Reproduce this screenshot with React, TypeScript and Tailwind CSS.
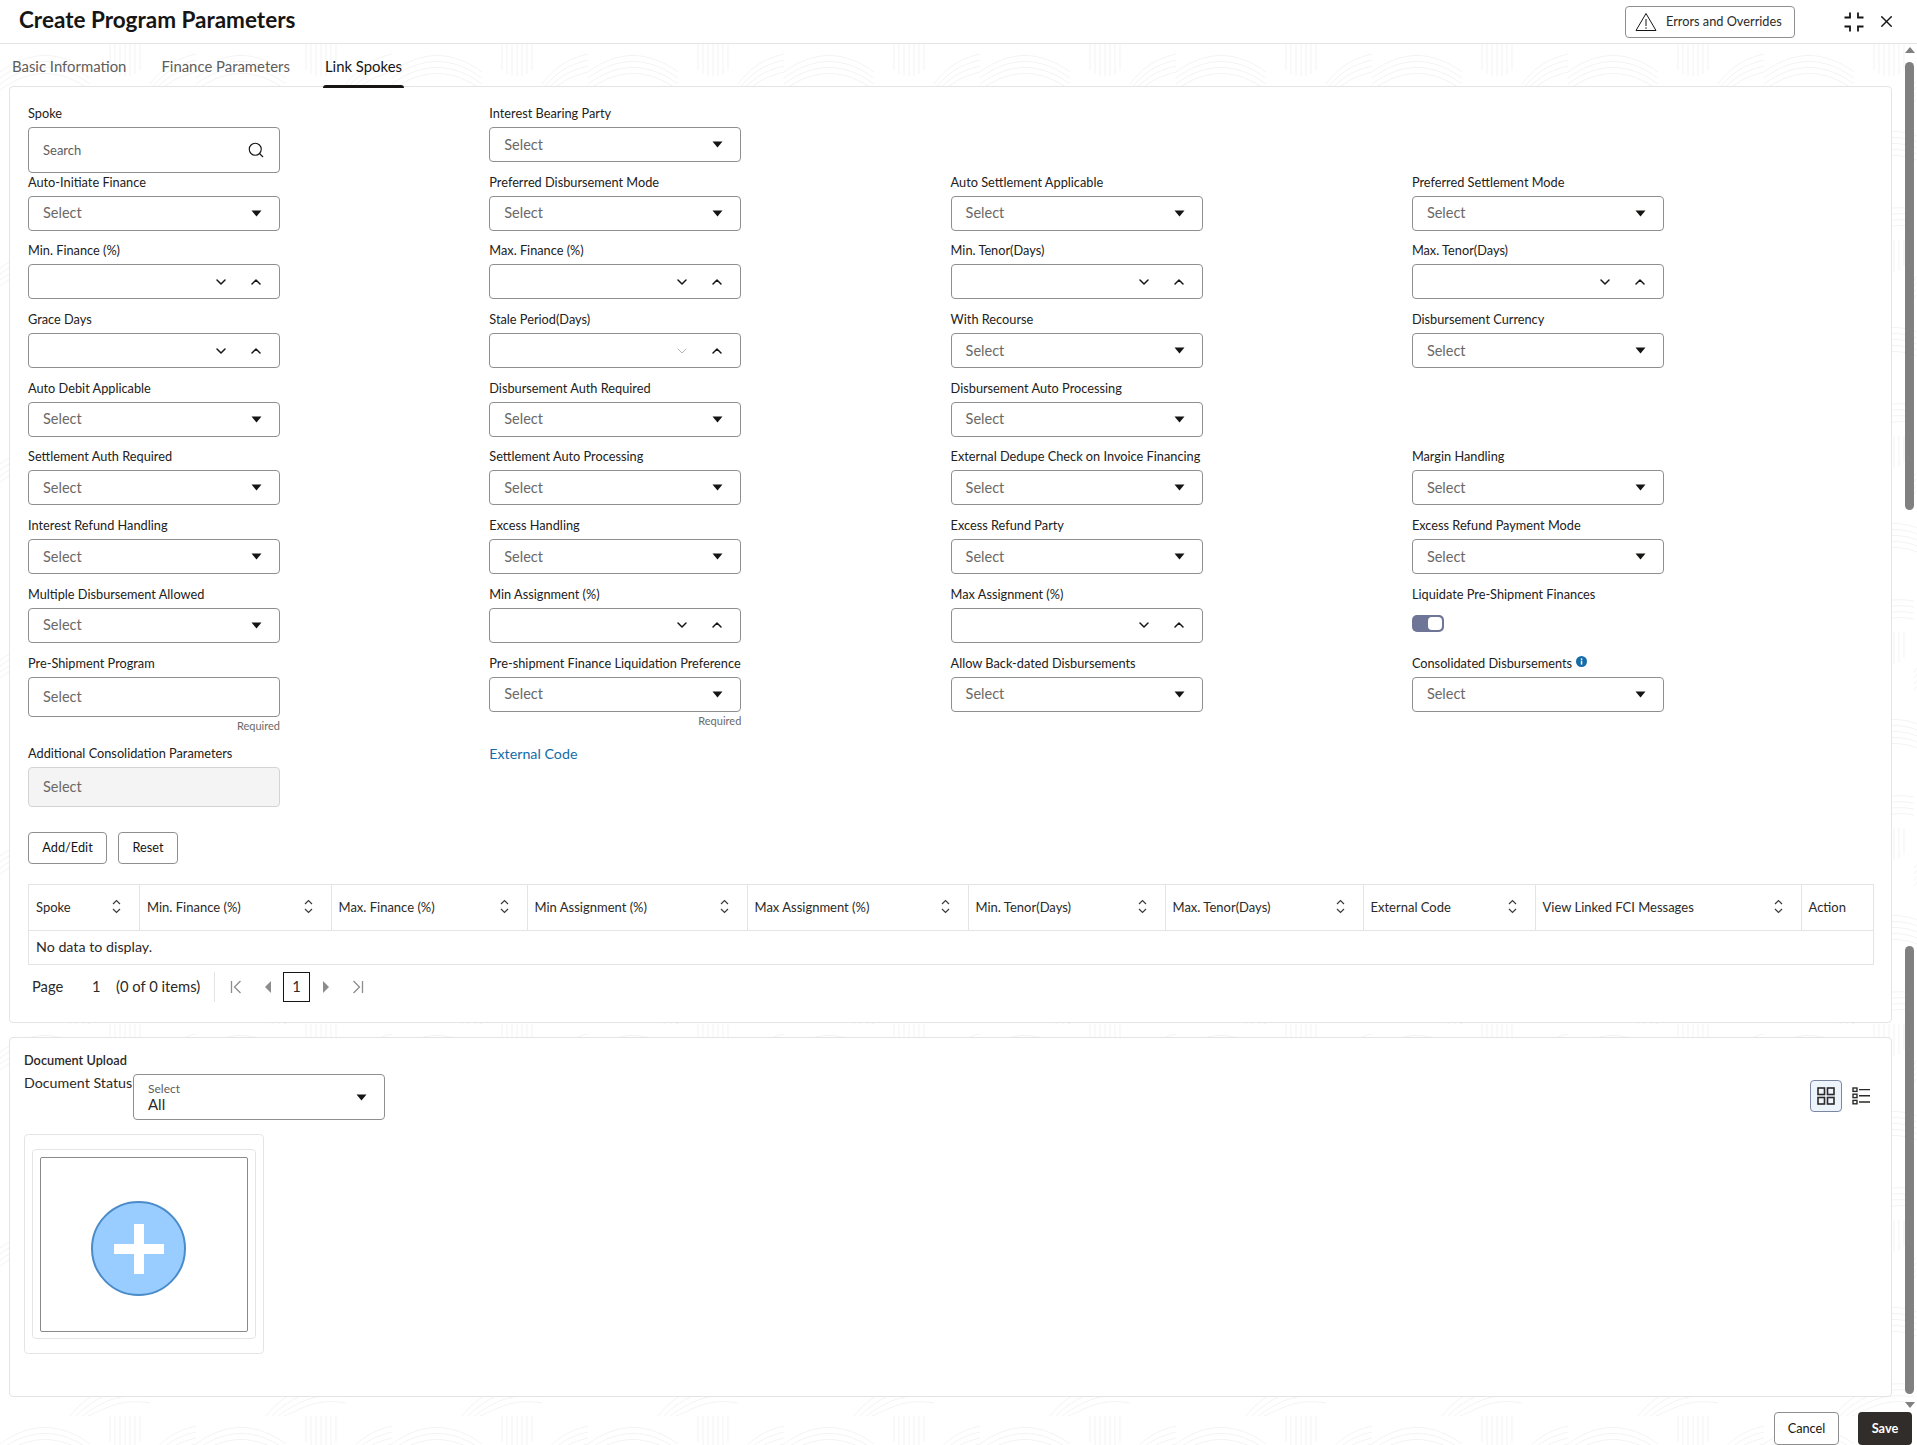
import { ChevronDown, ChevronUp, Search, X } from 'lucide-react';

type Kind = 'select' | 'stepper' | 'stepperOff' | 'search' | 'toggle' | 'none';
type FieldDef = { label: string; kind: Kind; info?: boolean };

const sel = (label: string): FieldDef => ({ label, kind: 'select' });
const num = (label: string): FieldDef => ({ label, kind: 'stepper' });
const none: FieldDef = { label: '', kind: 'none' };

const rows: FieldDef[][] = [
  [{ label: 'Spoke', kind: 'search' }, sel('Interest Bearing Party'), none, none],
  [sel('Auto-Initiate Finance'), sel('Preferred Disbursement Mode'), sel('Auto Settlement Applicable'), sel('Preferred Settlement Mode')],
  [num('Min. Finance (%)'), num('Max. Finance (%)'), num('Min. Tenor(Days)'), num('Max. Tenor(Days)')],
  [num('Grace Days'), { label: 'Stale Period(Days)', kind: 'stepperOff' }, sel('With Recourse'), sel('Disbursement Currency')],
  [sel('Auto Debit Applicable'), sel('Disbursement Auth Required'), sel('Disbursement Auto Processing'), none],
  [sel('Settlement Auth Required'), sel('Settlement Auto Processing'), sel('External Dedupe Check on Invoice Financing'), sel('Margin Handling')],
  [sel('Interest Refund Handling'), sel('Excess Handling'), sel('Excess Refund Party'), sel('Excess Refund Payment Mode')],
  [sel('Multiple Disbursement Allowed'), num('Min Assignment (%)'), num('Max Assignment (%)'), { label: 'Liquidate Pre-Shipment Finances', kind: 'toggle' }],
];

const columns = ['Spoke', 'Min. Finance (%)', 'Max. Finance (%)', 'Min Assignment (%)', 'Max Assignment (%)', 'Min. Tenor(Days)', 'Max. Tenor(Days)', 'External Code', 'View Linked FCI Messages', 'Action'];

function Caret() {
  return (
    <svg width="11" height="7" viewBox="0 0 11 7" className="shrink-0">
      <path d="M0.5 0.5h10L5.5 6.5z" fill="#161513" />
    </svg>
  );
}

function SortIcon() {
  return (
    <svg width="9" height="15" viewBox="0 0 9 15" fill="none" stroke="#3a3a3a" strokeWidth="1.2" className="mb-[2px] shrink-0">
      <path d="M1 5l3.5-3.5L8 5M1 10l3.5 3.5L8 10" />
    </svg>
  );
}

function Label({ text, info }: { text: string; info?: boolean }) {
  return (
    <div className="flex h-5 items-center gap-[4px] text-[12.75px] leading-5 whitespace-nowrap text-[#222120]">
      {text}
      {info && (
        <svg width="11" height="11" viewBox="0 0 11 11" className="mb-[2px]">
          <circle cx="5.5" cy="5.5" r="5.5" fill="#146ca8" />
          <rect x="4.8" y="4.6" width="1.5" height="4" fill="#fff" />
          <rect x="4.8" y="2.4" width="1.5" height="1.5" fill="#fff" />
        </svg>
      )}
    </div>
  );
}

function SelectBox() {
  return (
    <div className="flex h-[35px] w-[252px] items-center justify-between rounded-[4px] border border-[#8f8f8f] bg-white pr-[17px] pl-[14px] text-[14.5px] text-[#6b6967]">
      Select
      <Caret />
    </div>
  );
}

function Stepper({ off }: { off?: boolean }) {
  return (
    <div className="flex h-[35px] w-[252px] items-center justify-end gap-[19px] rounded-[4px] border border-[#8f8f8f] bg-white pr-[15px]">
      <ChevronDown size={16} strokeWidth={off ? 1.5 : 2.25} className={off ? 'text-[#b3b3b3]' : 'text-[#161513]'} />
      <ChevronUp size={16} strokeWidth={2.25} className="text-[#161513]" />
    </div>
  );
}

function Field({ def }: { def: FieldDef }) {
  if (def.kind === 'none') return <div />;
  return (
    <div className="flex flex-col">
      <Label text={def.label} info={def.info} />
      <div className="mt-[4px]">
        {def.kind === 'select' && <SelectBox />}
        {def.kind === 'stepper' && <Stepper />}
        {def.kind === 'stepperOff' && <Stepper off />}
        {def.kind === 'search' && (
          <div className="flex h-[46px] w-[252px] items-center justify-between rounded-[4px] border border-[#8f8f8f] pr-[14px] pl-[14px] text-[13px] text-[#5f5d5b]">
            <span className="pt-[1px]">Search</span>
            <Search size={18} strokeWidth={1.5} className="text-[#161513]" />
          </div>
        )}
        {def.kind === 'toggle' && (
          <div className="mt-[7px] flex h-[17px] w-[32px] items-center justify-end rounded-[5px] bg-[#6f7596] pr-[2px]">
            <div className="h-[13px] w-[14px] rounded-[4px] bg-white" />
          </div>
        )}
      </div>
    </div>
  );
}

function Pattern() {
  return (
    <svg className="absolute inset-0 h-full w-full" aria-hidden="true">
      <defs>
        <pattern id="prints" width="196" height="196" patternUnits="userSpaceOnUse">
          <g fill="none" stroke="#f3f3f3" strokeWidth="1">
            <path d="M0 28C30 6 60 6 90 28M0 34C30 12 60 12 90 34M0 40C30 18 60 18 90 40M0 46C30 24 60 24 90 46" />
            <path d="M110 0v26M115 0v30M120 0v32M125 0v32M130 0v32M135 0v30M140 0v26" />
            <path d="M150 40C165 20 180 14 196 10M150 46C165 26 180 20 196 16M150 52C165 32 180 26 196 22M150 58C165 38 180 32 196 28" />
            <path d="M14 70C34 100 34 130 14 160M20 70C40 100 40 130 20 160M26 70C46 100 46 130 26 160M32 70C52 100 52 130 32 160" />
            <path d="M80 110C110 80 150 80 180 110M80 116C110 86 150 86 180 116M80 122C110 92 150 92 180 122M80 128C110 98 150 98 180 128M80 134C110 104 150 104 180 134" />
            <path d="M70 196C90 170 120 160 150 165M76 196C96 176 120 166 150 171M82 196C102 182 120 172 150 177M88 196C108 188 120 178 150 183" />
          </g>
        </pattern>
      </defs>
      <rect width="100%" height="100%" fill="url(#prints)" />
    </svg>
  );
}

function FirstIcon() {
  return (
    <svg width="13" height="14" viewBox="0 0 13 14" fill="none" stroke="#8c8c8c" strokeWidth="1.3">
      <path d="M1.5 1v12M10.5 1L4.5 7l6 6" />
    </svg>
  );
}

function LastIcon() {
  return (
    <svg width="13" height="14" viewBox="0 0 13 14" fill="none" stroke="#8c8c8c" strokeWidth="1.3">
      <path d="M11.5 1v12M2.5 1l6 6-6 6" />
    </svg>
  );
}

function DocGridIcon() {
  return (
    <svg width="18" height="18" viewBox="0 0 18 18" fill="none" stroke="#2b2a28" strokeWidth="1.6">
      <rect x="1" y="1" width="6.5" height="6.5" />
      <rect x="10.5" y="1" width="6.5" height="6.5" />
      <rect x="1" y="10.5" width="6.5" height="6.5" />
      <rect x="10.5" y="10.5" width="6.5" height="6.5" />
    </svg>
  );
}

function DocListIcon() {
  return (
    <svg width="19" height="18" viewBox="0 0 19 18" fill="none" stroke="#2b2a28" strokeWidth="1.4">
      <rect x="1" y="1" width="4" height="3.4" />
      <rect x="1" y="7.2" width="4" height="3.4" />
      <rect x="1" y="13.4" width="4" height="3.4" />
      <path d="M7 2.6h11M7 8.8h11M7 15h11" />
    </svg>
  );
}

export default function App() {
  return (
    <div className="relative flex h-[1445px] w-[1917px] flex-col overflow-hidden bg-white font-['Lato','Liberation_Sans',sans-serif] text-[#161513]">
      {/* Header */}
      <header className="flex h-[44px] shrink-0 items-center border-b border-[#e4e4e4] bg-white pl-[19px]">
        <h1 className="mb-[3px] text-[22.5px] font-bold">Create Program Parameters</h1>
        <div className="ml-auto flex h-[32px] w-[170px] items-center gap-[9px] rounded-[4px] border border-[#8f8f8f] pl-[9px] text-[12.75px] whitespace-nowrap text-[#2b2a28]">
          <svg width="22" height="20" viewBox="0 0 22 20" fill="none" stroke="#161513" strokeWidth="1">
            <path d="M11 1.5L1 18.5h20zM11 7v7M11 15.2v1.6" />
          </svg>
          Errors and Overrides
        </div>
        <svg width="20" height="20" viewBox="0 0 20 20" fill="none" stroke="#161513" strokeWidth="1.8" className="mr-[13px] ml-[49px]">
          <path d="M6 0.5v5H0.5M14 0.5v5h5.5M6 19.5v-5H0.5M14 19.5v-5h5.5" />
        </svg>
        <X size={19} strokeWidth={1.75} className="mr-[21px]" />
      </header>

      {/* Body */}
      <div className="relative flex min-h-0 flex-1 flex-col">
        <Pattern />
        <div className="relative flex flex-1">
          <main className="ml-[9px] flex w-[1883px] flex-col">
            <nav className="relative flex h-[42px] items-center pl-[3px] text-[14.9px] text-[#5f5d5b]">
              <span className="mt-[2px] mr-[35px]">Basic Information</span>
              <span className="mt-[2px] mr-[35px]">Finance Parameters</span>
              <span className="relative mt-[2px] text-[#161513]">
                Link Spokes
                <span className="absolute right-[-2px] bottom-[-11px] left-[-2px] h-[3px] rounded-t-[3px] bg-[#161513]" />
              </span>
            </nav>

            {/* Link spokes card */}
            <section className="h-[937px] rounded-[4px] border border-[#e4e4e4] bg-white pt-[16px] pl-[18px]">
              {rows.map((row, i) => (
                <div key={i} className="grid h-[68.7px] grid-cols-[repeat(4,461.3px)]">
                  {row.map((def, j) => (
                    <Field key={j} def={def} />
                  ))}
                </div>
              ))}

              <div className="grid h-[90px] grid-cols-[repeat(4,461.3px)]">
                <div className="flex w-[252px] flex-col">
                  <Label text="Pre-Shipment Program" />
                  <div className="mt-[4px] flex h-[40px] items-center rounded-[4px] border border-[#8f8f8f] pl-[14px] text-[14.5px] text-[#6b6967]">Select</div>
                  <span className="mt-[2px] text-right text-[11px] leading-[14px] text-[#6b6967]">Required</span>
                </div>
                <div className="flex w-[252px] flex-col">
                  <Label text="Pre-shipment Finance Liquidation Preference" />
                  <div className="mt-[4px]">
                    <SelectBox />
                  </div>
                  <span className="mt-[2px] text-right text-[11px] leading-[14px] text-[#6b6967]">Required</span>
                </div>
                <Field def={sel('Allow Back-dated Disbursements')} />
                <Field def={{ label: 'Consolidated Disbursements', kind: 'select', info: true }} />
              </div>

              <div className="grid h-[89px] grid-cols-[repeat(4,461.3px)]">
                <div className="flex w-[252px] flex-col">
                  <Label text="Additional Consolidation Parameters" />
                  <div className="mt-[4px] flex h-[40px] items-center rounded-[4px] border border-[#d4d4d4] bg-[#f4f4f4] pl-[14px] text-[14.5px] text-[#6b6967]">Select</div>
                </div>
                <a className="mt-[1px] text-[14.25px] leading-5 text-[#146ca8]">External Code</a>
              </div>

              <div className="flex gap-[11px] text-[12.75px] text-[#161513]">
                <button className="h-[32px] w-[79px] rounded-[4px] border border-[#8f8f8f]">Add/Edit</button>
                <button className="h-[32px] w-[60px] rounded-[4px] border border-[#8f8f8f]">Reset</button>
              </div>

              {/* Table */}
              <div className="mt-[20px] w-[1846px] border border-[#e4e4e4] text-[13px] text-[#2b2a28]">
                <div className="grid h-[46px] grid-cols-[111px_191.5px_196px_220px_221px_197px_198px_172px_266px_72px] border-b border-[#e4e4e4]">
                  {columns.map((c, i) => (
                    <div key={c} className={`flex items-center justify-between pt-[1px] pr-[18px] pl-[7px] whitespace-nowrap ${i < 9 ? 'border-r border-[#e4e4e4]' : ''}`}>
                      {c}
                      {i < 9 && <SortIcon />}
                    </div>
                  ))}
                </div>
                <div className="flex h-[33px] items-center pl-[7px] text-[14.25px]">No data to display.</div>
              </div>

              {/* Pagination */}
              <div className="mt-[7px] flex h-[30px] items-center text-[14.75px] text-[#2b2a28]">
                <span className="ml-[4px] w-[60px]">Page</span>
                <span className="w-[24px]">1</span>
                <span className="w-[98px] whitespace-nowrap">(0 of 0 items)</span>
                <span className="h-[30px] w-px bg-[#e4e4e4]" />
                <span className="ml-[15px]">
                  <FirstIcon />
                </span>
                <span className="ml-[22px] h-0 w-0 border-y-[6px] border-r-[6px] border-y-transparent border-r-[#8c8c8c]" />
                <span className="ml-[12px] flex h-[30px] w-[27px] items-center justify-center border border-[#161513]">1</span>
                <span className="ml-[13px] h-0 w-0 border-y-[6px] border-l-[6px] border-y-transparent border-l-[#8c8c8c]" />
                <span className="ml-[22px]">
                  <LastIcon />
                </span>
              </div>
            </section>

            {/* Document upload card */}
            <section className="mt-[14px] h-[360px] rounded-[4px] border border-[#e4e4e4] bg-white pt-[12px] pl-[14px]">
              <div className="text-[12.75px] leading-5 font-semibold text-[#2b2a28]">Document Upload</div>
              <div className="mt-[4px] flex items-start">
                <span className="w-[109px] text-[14.25px] leading-[17px] whitespace-nowrap text-[#2b2a28]">Document Status</span>
                <div className="flex h-[46px] w-[252px] items-center justify-between rounded-[4px] border border-[#8f8f8f] pr-[17px] pl-[14px]">
                  <div className="flex flex-col">
                    <span className="text-[12px] leading-[14px] text-[#5f5d5b]">Select</span>
                    <span className="text-[15px] leading-[17px] text-[#2b2a28]">All</span>
                  </div>
                  <Caret />
                </div>
                <div className="mr-[20px] ml-auto flex items-center gap-[10px] pt-[6px]">
                  <div className="flex h-[32px] w-[32px] items-center justify-center rounded-[4px] border border-[#7b86a3] bg-[#eef4fc]">
                    <DocGridIcon />
                  </div>
                  <DocListIcon />
                </div>
              </div>
              <div className="mt-[14px] flex h-[220px] w-[240px] items-center justify-center rounded-[4px] border border-[#e4e4e4]">
                <div className="flex h-[190px] w-[224px] items-center justify-center rounded-[4px] border border-[#e4e4e4]">
                  <div className="flex h-[175px] w-[208px] items-center rounded-[2px] border border-[#8a8a8a] pl-[50px]">
                    <div className="relative mt-[8px] h-[95px] w-[95px] rounded-full border-2 border-[#4a8bc9] bg-[#99ccff]">
                      <div className="absolute top-[21px] left-[41px] h-[50px] w-[10px] bg-white" />
                      <div className="absolute top-[41px] left-[21px] h-[10px] w-[50px] bg-white" />
                    </div>
                  </div>
                </div>
              </div>
            </section>
          </main>

          {/* Scrollbar */}
          <div className="ml-[13px] flex w-[9px] flex-col items-center pt-[3px]">
            <div className="h-0 w-0 border-x-[5px] border-b-[6px] border-x-transparent border-b-[#808080]" />
            <div className="mt-[9px] h-[448px] w-[9px] rounded-full bg-[#808080]" />
            <div className="mt-[436px] h-[448px] w-[9px] rounded-full bg-[#808080]" />
            <div className="mt-[8px] h-0 w-0 border-x-[5px] border-t-[6px] border-x-transparent border-t-[#808080]" />
          </div>
        </div>

        {/* Footer */}
        <footer className="relative flex h-[33px] shrink-0 justify-end gap-[19px] pr-[5px] text-[12.75px]">
          <button className="w-[65px] rounded-[4px] border border-[#8f8f8f] bg-white">Cancel</button>
          <button className="w-[54px] rounded-[4px] bg-[#312d2a] font-bold text-white">Save</button>
        </footer>
      </div>
    </div>
  );
}
